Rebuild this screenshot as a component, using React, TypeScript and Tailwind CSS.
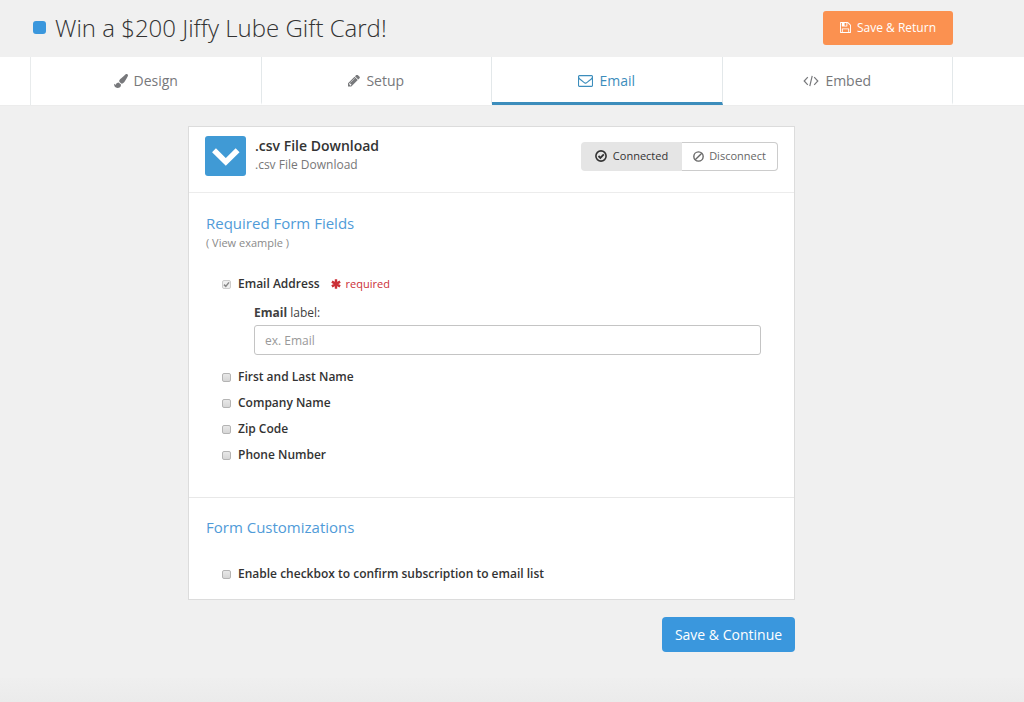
import { useState } from "react";
import { FaPaintBrush } from "react-icons/fa";

const PencilIcon = () => (
    <svg viewBox="128 256 1536 1408" className="w-3 h-3" fill="currentColor" aria-hidden="true">
        <path d="M491 1536l91-91-235-235-91 91v107h128v128h107zm523-928q0-22-22-22-10 0-17 7l-542 542q-7 7-7 17 0 22 22 22 10 0 17-7l542-542q7-7 7-17zm-54-192l416 416-832 832h-416v-416zm683 96q0 53-37 90l-166 166-416-416 166-165q36-38 90-38 53 0 91 38l235 234q37 39 37 91z" />
    </svg>
);

const EnvelopeIcon = () => (
    <svg viewBox="0 256 1792 1408" className="w-[15px] h-3" fill="currentColor" aria-hidden="true">
        <path d="M1664 1504v-768q-32 36-69 66-268 206-426 338-51 43-83 67t-86.5 48.5-102.5 24.5h-2q-48 0-102.5-24.5t-86.5-48.5-83-67q-158-132-426-338-37-30-69-66v768q0 13 9.5 22.5t22.5 9.5h1472q13 0 22.5-9.5t9.5-22.5zm0-1051v-24.5l-.5-13-3-12.5-5.5-9-9-7.5-14-2.5h-1472q-13 0-22.5 9.5t-9.5 22.5q0 168 147 284 193 152 401 317 6 5 35 29.5t46 37.5 44.5 31.5 50.5 27.5 43 9h2q20 0 43-9t50.5-27.5 44.5-31.5 46-37.5 35-29.5q208-165 401-317 54-43 100.5-115.5t46.5-131.5zm128-37v1088q0 66-47 113t-113 47h-1472q-66 0-113-47t-47-113v-1088q0-66 47-113t113-47h1472q66 0 113 47t47 113z" />
    </svg>
);

const CodeIcon = () => (
    <svg viewBox="0 0 16 12" className="w-4 h-3" fill="none" stroke="currentColor" strokeWidth="1.2" aria-hidden="true">
        <path d="M4.8 2.2 1.2 6l3.6 3.8M11.2 2.2 14.8 6l-3.6 3.8M9.2 .8 6.8 11.2" />
    </svg>
);

const SaveIcon = () => (
    <svg viewBox="0 128 1536 1536" className="w-[11px] h-[11px]" fill="currentColor" aria-hidden="true">
        <path d="M384 1536h768v-384h-768v384zm896 0h128v-896q0-14-10-38.5t-20-34.5l-281-281q-10-10-34-20t-39-10v416q0 40-28 68t-68 28h-576q-40 0-68-28t-28-68v-416h-128v1280h128v-416q0-40 28-68t68-28h832q40 0 68 28t28 68v416zm-384-928v-320q0-13-9.5-22.5t-22.5-9.5h-192q-13 0-22.5 9.5t-9.5 22.5v320q0 13 9.5 22.5t22.5 9.5h192q13 0 22.5-9.5t9.5-22.5zm640 32v928q0 40-28 68t-68 28h-1344q-40 0-68-28t-28-68v-1344q0-40 28-68t68-28h928q40 0 88 20t76 48l280 280q28 28 48 76t20 88z" />
    </svg>
);

const AsteriskIcon = () => (
    <svg viewBox="0 0 10 10" className="w-[10px] h-[10px]" fill="none" stroke="currentColor" strokeWidth="2.4" aria-hidden="true">
        <path d="M5 .3v9.4M.9 2.6l8.2 4.8M.9 7.4l8.2-4.8" />
    </svg>
);

const tabs = [
    { name: "Design", icon: <FaPaintBrush className="w-[14px] h-[14px]" /> },
    { name: "Setup", icon: <PencilIcon /> },
    { name: "Email", icon: <EnvelopeIcon /> },
    { name: "Embed", icon: <CodeIcon /> },
];

const fields = ["First and Last Name", "Company Name", "Zip Code", "Phone Number"];

const boxClass =
    "appearance-none shrink-0 w-[9px] h-[9px] rounded-[2px] border border-[#b4b4b4] bg-linear-to-b from-[#e8e8e8] to-[#d6d6d6] checked:bg-none checked:bg-[#8a8a8a]";

function CheckRow({ label }: { label: string }) {
    return (
        <label className="flex items-center gap-[7px] h-[26px] text-xs font-semibold text-[#333]">
            <input type="checkbox" className={boxClass} />
            {label}
        </label>
    );
}

function App() {
    const [active, setActive] = useState("Email");

    return (
        <div className="min-h-screen flex flex-col bg-[#f0f0f0] text-[#3f3f3f] font-['Open_Sans',sans-serif]">
            <header className="flex items-center justify-between h-[57px] pb-[2px] pl-[33px] pr-[71px]">
                <h1 className="flex items-center gap-[9px] text-2xl font-light text-[#333]">
                    <span className="w-[13px] h-[13px] rounded-[3px] bg-[#3a97dd]" />
                    Win a $200 Jiffy Lube Gift Card!
                </h1>
                <button className="flex items-center justify-center gap-[6px] w-[130px] h-[34px] rounded-[3px] bg-[#fb9150] text-xs text-white">
                    <SaveIcon />
                    Save &amp; Return
                </button>
            </header>

            <nav className="bg-white border-b border-[#ececec] pl-[30px] pr-[71px]">
                <div className="flex border-l border-[#e8ebec]">
                    {tabs.map((tab) => (
                        <a
                            key={tab.name}
                            href={`#${tab.name.toLowerCase()}`}
                            onClick={() => setActive(tab.name)}
                            className={`flex flex-1 items-center justify-center gap-[6px] h-12 border-r border-r-[#e3e8ea] border-b-3 pt-[3px] text-sm ${
                                active === tab.name ? "border-b-[#3c8dbc] text-[#3c8dbc]" : "border-b-transparent text-[#77787b]"
                            }`}
                        >
                            {tab.icon}
                            {tab.name}
                        </a>
                    ))}
                </div>
            </nav>

            <main className="flex-1 pl-[31px] pr-[72px] pt-5">
                <div className="max-w-[607px] mx-auto">
                    <div className="bg-white border border-[#dcdcdc]">
                        <div className="flex items-center justify-between h-[66px] px-4 pb-[7px] border-b border-[#ececec]">
                            <div className="flex items-center gap-[9px]">
                                <svg viewBox="0 0 41 40" className="w-[41px] h-10" aria-hidden="true">
                                    <rect width="41" height="40" rx="3" fill="#409ad5" />
                                    <path d="m9 14.3 11.8 11.7 11.8-11.7" fill="none" stroke="#fff" strokeWidth="5.5" />
                                </svg>
                                <div className="pb-[2px]">
                                    <h2 className="text-sm leading-5 font-semibold text-[#333]">.csv File Download</h2>
                                    <p className="text-xs leading-[18px] text-[#777]">.csv File Download</p>
                                </div>
                            </div>
                            <div className="flex text-[11px]">
                                <button className="flex items-center justify-center gap-[6px] w-[101px] h-[29px] rounded-l-[4px] bg-[#e5e5e5] text-[#333]">
                                    <svg viewBox="0 0 12 12" className="w-3 h-3" fill="none" stroke="currentColor" aria-hidden="true">
                                        <circle cx="6" cy="6" r="5.1" strokeWidth="1.6" />
                                        <path d="m3.5 6 1.9 1.9L8.8 4.4" strokeWidth="1.8" />
                                    </svg>
                                    Connected
                                </button>
                                <button className="flex items-center justify-center gap-[5px] w-24 h-[29px] rounded-r-[4px] border border-l-0 border-[#ccc] text-[#666]">
                                    <svg viewBox="0 0 12 12" className="w-[11px] h-[11px]" fill="none" stroke="currentColor" strokeWidth="1.5" aria-hidden="true">
                                        <circle cx="6" cy="6" r="5.1" />
                                        <path d="m2.4 9.6 7.2-7.2" />
                                    </svg>
                                    Disconnect
                                </button>
                            </div>
                        </div>

                        <section className="px-[17px] pt-[18px] pb-[29px] border-b border-[#e8e8e8]">
                            <h3 className="text-[15px] leading-6 text-[#509bd8]">Required Form Fields</h3>
                            <a href="#example" className="block text-[11px] leading-4 text-[#8a8a8a]">
                                ( View example )
                            </a>
                            <div className="pl-4 pt-5">
                                <div className="flex items-center h-[26px] gap-[11px]">
                                    <label className="flex items-center gap-[7px] text-xs font-semibold text-[#333]">
                                        <span className="grid">
                                            <input
                                                type="checkbox"
                                                defaultChecked
                                                disabled
                                                className="appearance-none col-start-1 row-start-1 w-[9px] h-[9px] rounded-[2px] border border-[#ccc] bg-[#eee]"
                                            />
                                            <svg viewBox="0 0 9 9" className="col-start-1 row-start-1 w-[9px] h-[9px]" fill="none" stroke="#888" strokeWidth="1.5" aria-hidden="true">
                                                <path d="m2 4.6 1.8 1.8L7 2.4" />
                                            </svg>
                                        </span>
                                        Email Address
                                    </label>
                                    <span className="flex items-center gap-[5px] text-[11px] text-[#cb2f36]">
                                        <AsteriskIcon />
                                        required
                                    </span>
                                </div>
                                <div className="pl-8 pr-4 pt-1 pb-[9px]">
                                    <label htmlFor="email-label" className="block text-xs leading-6">
                                        <strong className="font-bold">Email</strong> label:
                                    </label>
                                    <input
                                        id="email-label"
                                        type="text"
                                        placeholder="ex. Email"
                                        className="w-full h-[30px] px-[10px] rounded-[3px] border border-[#c4c4c4] bg-white text-xs placeholder:text-[#999]"
                                    />
                                </div>
                                {fields.map((field) => (
                                    <CheckRow key={field} label={field} />
                                ))}
                            </div>
                        </section>

                        <section className="px-[17px] pt-[17px] pb-3">
                            <h3 className="text-[15px] leading-6 text-[#509bd8]">Form Customizations</h3>
                            <div className="pl-4 pt-[22px]">
                                <CheckRow label="Enable checkbox to confirm subscription to email list" />
                            </div>
                        </section>
                    </div>

                    <div className="flex justify-end pt-[17px]">
                        <button className="w-[133px] h-[35px] rounded-[4px] bg-[#3a97dd] text-sm font-medium text-white">
                            Save &amp; Continue
                        </button>
                    </div>
                </div>
            </main>

            <footer className="h-6 bg-linear-to-b from-[#efefef] to-[#ebebeb]" />
        </div>
    );
}

export default App;
